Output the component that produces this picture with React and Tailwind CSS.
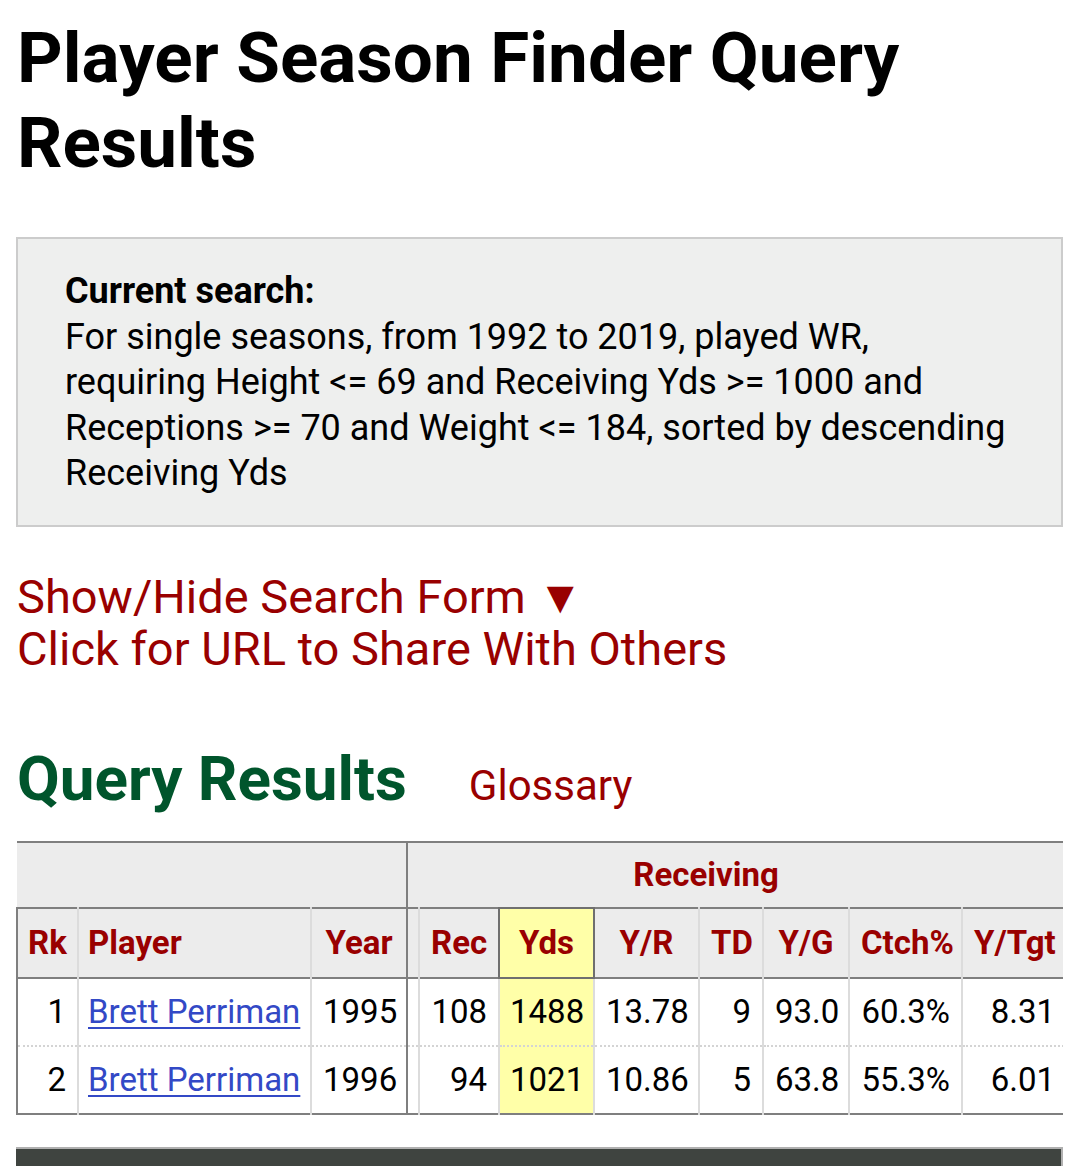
import React from 'react';

const rows = [
  { rk: 1, player: 'Brett Perriman', year: 1995, rec: 108, yds: 1488, yr: '13.78', td: 9, yg: '93.0', ctch: '60.3%', ytgt: '8.31' },
  { rk: 2, player: 'Brett Perriman', year: 1996, rec: 94, yds: 1021, yr: '10.86', td: 5, yg: '63.8', ctch: '55.3%', ytgt: '6.01' },
];

const th = 'px-[11px] font-bold text-[#990000] border-l-2 border-[#dcdcdc] text-center whitespace-nowrap';
const td = 'px-[11px] text-right border-l-2 border-[#dcdcdc] whitespace-nowrap';

const App = () => {
  return (
    <div className="min-h-[1166px] bg-white pl-[16px] pr-[17px] pt-[15px] text-black font-['Roboto',sans-serif]">
      <h1 className="text-[71px] leading-[85px] font-bold pl-[1px]">Player Season Finder Query Results</h1>

      <div className="mt-[52px] border-2 border-[#cccccc] bg-[#eeefee] pl-[47px] pr-[47px] pt-[30px] pb-[28px] text-[36px] leading-[45.5px]">
        <div className="font-bold">Current search:</div>
        <div>
          For single seasons, from 1992 to 2019, played WR, requiring Height &lt;= 69 and Receiving Yds &gt;= 1000 and
          Receptions &gt;= 70 and Weight &lt;= 184, sorted by descending Receiving Yds
        </div>
      </div>

      <div className="mt-[44px] pl-[1px] text-[47px] leading-[52px] text-[#990000]">
        <div>Show/Hide Search Form <span className="text-[46px]">▼</span></div>
        <div>Click for URL to Share With Others</div>
      </div>

      <div className="mt-[69px] flex items-baseline gap-[62px] pl-[1px]">
        <h2 className="text-[62px] leading-[70px] font-bold text-[#00552c]">Query Results</h2>
        <span className="text-[42px] text-[#990000]">Glossary</span>
      </div>

      <div className="mt-[24px] w-[1047px] overflow-hidden">
        <table className="w-[1047px] table-fixed border-collapse text-[33px]">
          <colgroup>
            <col className="w-[61px]" />
            <col className="w-[233px]" />
            <col className="w-[96px]" />
            <col className="w-[12px]" />
            <col className="w-[80px]" />
            <col className="w-[95px]" />
            <col className="w-[105px]" />
            <col className="w-[64px]" />
            <col className="w-[86px]" />
            <col className="w-[113px]" />
            <col className="w-[102px]" />
          </colgroup>
          <thead>
            <tr className="h-[66px] bg-[#ececec] border-t-2 border-[#7f7f7f]">
              <th colSpan={3} className="border-r-2 border-[#7f7f7f]"></th>
              <th colSpan={8} className="pr-[60px] font-bold text-[#990000] text-center border-l-2 border-[#7f7f7f]">
                Receiving
              </th>
            </tr>
            <tr className="h-[70px] bg-[#ececec] border-t-2 border-b-2 border-[#7f7f7f]">
              <th className="px-[6px] font-bold text-[#990000] text-center border-l-2 border-[#7f7f7f]">Rk</th>
              <th className={th + ' text-left pl-[9px]'}>Player</th>
              <th className={th}>Year</th>
              <th className="border-l-2 border-[#7f7f7f]"></th>
              <th className={th}>Rec</th>
              <th className="px-[8px] font-bold text-[#990000] text-center bg-[#ffffa8] border-2 border-[#6f6f6f]">Yds</th>
              <th className={th}>Y/R</th>
              <th className={th + ' px-[6px]'}>TD</th>
              <th className={th + ' px-[6px]'}>Y/G</th>
              <th className={th + ' px-[6px]'}>Ctch%</th>
              <th className={th + ' px-[6px]'}>Y/Tgt</th>
            </tr>
          </thead>
          <tbody>
            {rows.map((r, i) => (
              <tr
                key={r.rk}
                className={
                  'h-[68px] ' +
                  (i === 0 ? 'border-b-2 border-dotted border-[#d4d4d4]' : 'border-b-2 border-[#7f7f7f]')
                }
              >
                <td className="px-[11px] text-right border-l-2 border-[#7f7f7f]">{r.rk}</td>
                <td className={td + ' text-left pl-[9px]'}>
                  <a href="#" className="text-[#3349c6] underline underline-offset-[4px] decoration-2">{r.player}</a>
                </td>
                <td className={td}>{r.year}</td>
                <td className="border-l-2 border-[#7f7f7f] border-r-2 border-r-[#dcdcdc]"></td>
                <td className={td}>{r.rec}</td>
                <td className="px-[10px] text-right bg-[#ffffa8] border-l-2 border-[#dcdcdc]">{r.yds}</td>
                <td className={td}>{r.yr}</td>
                <td className={td}>{r.td}</td>
                <td className={td}>{r.yg}</td>
                <td className={td}>{r.ctch}</td>
                <td className={td + ' pr-[9px]'}>{r.ytgt}</td>
              </tr>
            ))}
          </tbody>
        </table>
      </div>

      <div className="mt-[32px] h-[20px] w-[1047px] bg-[#3f4440] border-t-2 border-r-2 border-[#b0b0b0]"></div>
    </div>
  );
};

export default App;
